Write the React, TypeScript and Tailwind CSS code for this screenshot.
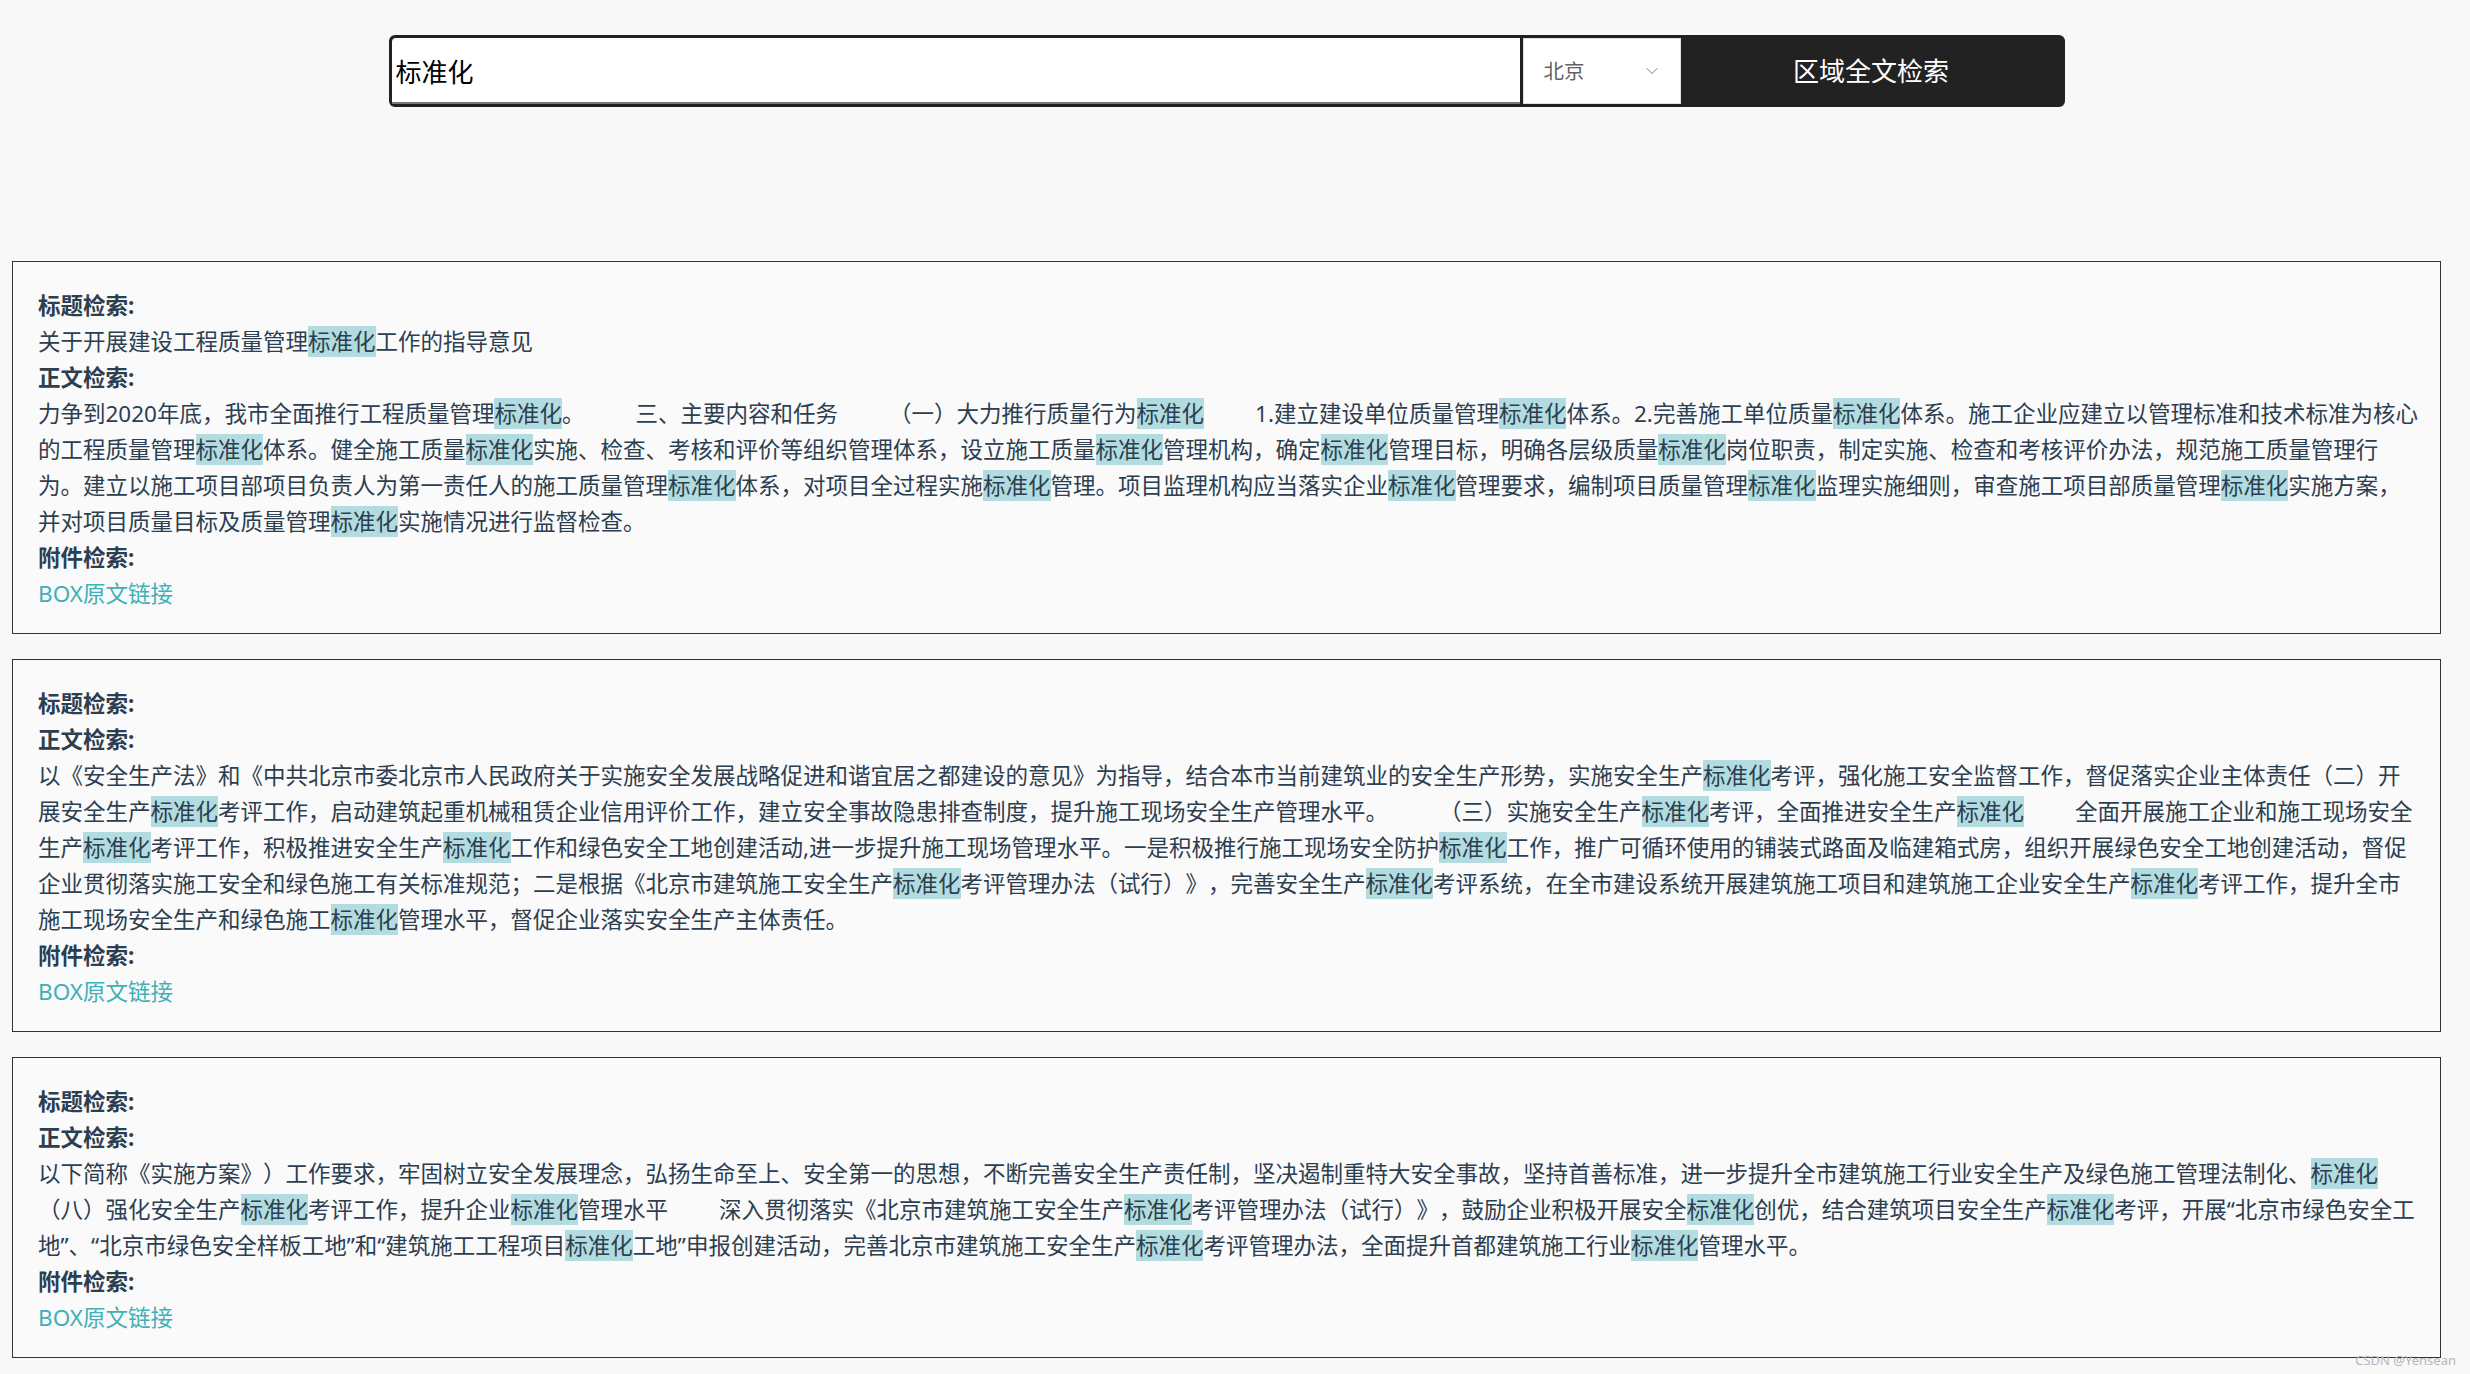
import React from 'react';
import { ChevronDown } from 'lucide-react';

// 结果数据：\t 表示原文中的大段空白
interface ResultItem {
  title: string;
  body: string[];
}

const results: ResultItem[] = [
  {
    title: '关于开展建设工程质量管理标准化工作的指导意见',
    body: [
      '力争到2020年底，我市全面推行工程质量管理标准化。\t三、主要内容和任务\t（一）大力推行质量行为标准化\t1.建立建设单位质量管理标准化体系。2.完善施工单位质量标准化体系。施工企业应建立以管理标准和技术标准为核心',
      '的工程质量管理标准化体系。健全施工质量标准化实施、检查、考核和评价等组织管理体系，设立施工质量标准化管理机构，确定标准化管理目标，明确各层级质量标准化岗位职责，制定实施、检查和考核评价办法，规范施工质量管理行',
      '为。建立以施工项目部项目负责人为第一责任人的施工质量管理标准化体系，对项目全过程实施标准化管理。项目监理机构应当落实企业标准化管理要求，编制项目质量管理标准化监理实施细则，审查施工项目部质量管理标准化实施方案，',
      '并对项目质量目标及质量管理标准化实施情况进行监督检查。',
    ],
  },
  {
    title: '',
    body: [
      '以《安全生产法》和《中共北京市委北京市人民政府关于实施安全发展战略促进和谐宜居之都建设的意见》为指导，结合本市当前建筑业的安全生产形势，实施安全生产标准化考评，强化施工安全监督工作，督促落实企业主体责任（二）开',
      '展安全生产标准化考评工作，启动建筑起重机械租赁企业信用评价工作，建立安全事故隐患排查制度，提升施工现场安全生产管理水平。\t（三）实施安全生产标准化考评，全面推进安全生产标准化\t全面开展施工企业和施工现场安全',
      '生产标准化考评工作，积极推进安全生产标准化工作和绿色安全工地创建活动,进一步提升施工现场管理水平。一是积极推行施工现场安全防护标准化工作，推广可循环使用的铺装式路面及临建箱式房，组织开展绿色安全工地创建活动，督促',
      '企业贯彻落实施工安全和绿色施工有关标准规范；二是根据《北京市建筑施工安全生产标准化考评管理办法（试行）》，完善安全生产标准化考评系统，在全市建设系统开展建筑施工项目和建筑施工企业安全生产标准化考评工作，提升全市',
      '施工现场安全生产和绿色施工标准化管理水平，督促企业落实安全生产主体责任。',
    ],
  },
  {
    title: '',
    body: [
      '以下简称《实施方案》）工作要求，牢固树立安全发展理念，弘扬生命至上、安全第一的思想，不断完善安全生产责任制，坚决遏制重特大安全事故，坚持首善标准，进一步提升全市建筑施工行业安全生产及绿色施工管理法制化、标准化',
      '（八）强化安全生产标准化考评工作，提升企业标准化管理水平\t深入贯彻落实《北京市建筑施工安全生产标准化考评管理办法（试行）》，鼓励企业积极开展安全标准化创优，结合建筑项目安全生产标准化考评，开展“北京市绿色安全工',
      '地”、“北京市绿色安全样板工地”和“建筑施工工程项目标准化工地”申报创建活动，完善北京市建筑施工安全生产标准化考评管理办法，全面提升首都建筑施工行业标准化管理水平。',
    ],
  },
];

const KEYWORD = '标准化';

// 关键词高亮
function Highlight({ text }: { text: string }) {
  const parts = text.split(KEYWORD);
  return (
    <>
      {parts.map((p, i) => (
        <React.Fragment key={i}>
          {p}
          {i < parts.length - 1 && <span className="bg-[#b2dcdf]">{KEYWORD}</span>}
        </React.Fragment>
      ))}
    </>
  );
}

function Line({ text }: { text: string }) {
  const segs = text.split('\t');
  return (
    <div className="whitespace-nowrap">
      {segs.map((s, i) => (
        <React.Fragment key={i}>
          {i > 0 && <span className="inline-block w-[51px]" />}
          <Highlight text={s} />
        </React.Fragment>
      ))}
    </div>
  );
}

function ResultCard({ item }: { item: ResultItem }) {
  return (
    <div className="border border-[#333] bg-[#fafafa] px-[25px] pt-[26px] pb-[21px] text-[22.5px] leading-[36px] text-[#2c3e50] [text-spacing-trim:space-all]">
      <div className="font-bold">标题检索:</div>
      {item.title && <Line text={item.title} />}
      <div className="font-bold">正文检索:</div>
      {item.body.map((l, i) => (
        <Line key={i} text={l} />
      ))}
      <div className="font-bold">附件检索:</div>
      <div>
        <a className="text-[#3fb0b8] cursor-pointer">BOX原文链接</a>
      </div>
    </div>
  );
}

export default function App() {
  return (
    <div className="relative min-h-screen bg-[#f8f8f8] pr-[17px] pb-[15px] font-['Noto_Sans','Noto_Sans_CJK_SC',sans-serif]">
      {/* 搜索栏 */}
      <div className="flex justify-center pt-[35px]">
        <div className="flex h-[72px] w-[1676px] rounded-[6px] bg-[#222] p-[3px]">
          <input
            className="h-full flex-1 rounded-tl-[4px] border-b-2 border-[#777] bg-white px-[4px] font-['Noto_Sans_CJK_SC',sans-serif] text-[26px] text-black outline-none"
            defaultValue="标准化"
          />
          <div className="ml-[3px] flex h-full w-[158px] items-center justify-between border border-[#dcdfe6] bg-white pl-[20px] pr-[18px]">
            <span className="text-[20.5px] text-[#606266]">北京</span>
            <ChevronDown className="h-[20px] w-[20px] text-[#b4b8c0]" strokeWidth={1.4} />
          </div>
          <button className="flex-1 max-w-[381px] text-[26px] text-white">区域全文检索</button>
        </div>
      </div>

      {/* 结果列表 */}
      <div className="mt-[154px] flex flex-col gap-[25px] px-[12px]">
        {results.map((r, i) => (
          <ResultCard key={i} item={r} />
        ))}
      </div>

      <div className="absolute bottom-[4px] right-[14px] text-[13px] text-[#b5b5b5]">CSDN @Yensean</div>
    </div>
  );
}
